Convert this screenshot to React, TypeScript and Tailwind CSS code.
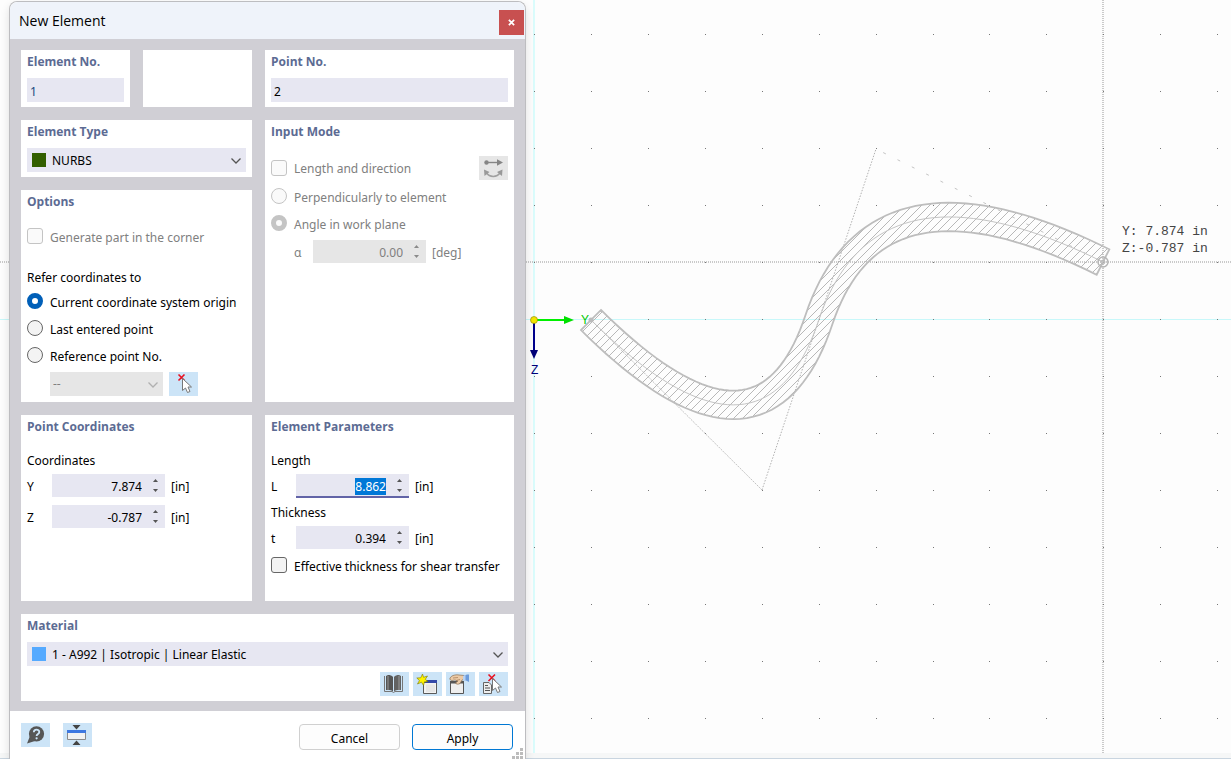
import { useEffect, useRef, type InputHTMLAttributes, type ReactNode } from "react";
import clsx from "clsx";

type Point = { x: number; y: number };

const controlPoints: Point[] = [
  { x: 591, y: 320 },
  { x: 762, y: 490 },
  { x: 876, y: 149 },
  { x: 1103, y: 262 },
];

const gridColumns = Array.from({ length: 40 }, (_, i) => Math.round(534.2 + i * 56.9));
const gridRows = Array.from({ length: 24 }, (_, i) => Math.round(34.4 + i * 57));

// quadratic segment sampled at an offset from its centre line
function offsetSegment(a: Point, b: Point, c: Point, offset: number) {
  return Array.from({ length: 41 }, (_, i) => {
    const t = i / 40;
    const x = (1 - t) ** 2 * a.x + 2 * t * (1 - t) * b.x + t * t * c.x;
    const y = (1 - t) ** 2 * a.y + 2 * t * (1 - t) * b.y + t * t * c.y;
    const dx = (1 - t) * (b.x - a.x) + t * (c.x - b.x);
    const dy = (1 - t) * (b.y - a.y) + t * (c.y - b.y);
    const len = Math.hypot(dx, dy);
    return { x: x + (dy / len) * offset, y: y - (dx / len) * offset };
  });
}

function splinePoints(offset: number) {
  const [p0, p1, p2, p3] = controlPoints;
  const mid = { x: (p1.x + p2.x) / 2, y: (p1.y + p2.y) / 2 };
  return [...offsetSegment(p0, p1, mid, offset), ...offsetSegment(mid, p2, p3, offset)];
}

const toPath = (points: Point[]) =>
  points.map((p, i) => `${i ? "L" : "M"}${p.x.toFixed(2)} ${p.y.toFixed(2)}`).join("");

const outline = toPath([...splinePoints(14.2), ...splinePoints(-14.2).reverse()]) + "Z";
const centerLine = toPath(splinePoints(0));

// 45 degree hatch lines, clipped to the outline
const hatchLines = Array.from({ length: 72 }, (_, i) => {
  const sum = 880 + Math.round(i * 8.5);
  return `M${sum - 430} 430L${sum - 190} 190`;
}).join("");

function Canvas() {
  return (
    <div className="absolute inset-0 flex flex-col bg-[#fdfdfd]">
      <svg className="min-h-0 w-full flex-1" role="img" aria-label="Work plane">
        <defs>
          <clipPath id="element-shape">
            <path d={outline} />
          </clipPath>
        </defs>

        <path d="M534 0V753" stroke="#dafcfc" strokeWidth="2" />
        <path d="M0 319.5H4000" stroke="#c8f8fa" />
        <path d="M0 262H4000M1103 0V753" stroke="#cacaca" strokeWidth="2" strokeDasharray="1 1" />

        {gridRows.map((y) =>
          gridColumns.map((x) => (
            <rect key={`${x}-${y}`} x={x} y={y} width="1" height="1" fill="#777" />
          )),
        )}

        <g fill="none">
          <path d="M591 320L762 490" stroke="#b4b4b4" strokeDasharray="2 1" strokeWidth="0.8" />
          <path d="M762 490L876 149" stroke="#a8a8a8" strokeDasharray="1.5 1.5" strokeWidth="0.9" />
          <path d="M876 149L1103 262" stroke="#c4c4c4" strokeDasharray="3 13" strokeDashoffset="-8" />
          <path
            d={hatchLines}
            clipPath="url(#element-shape)"
            stroke="#b8b8b8"
            strokeWidth="1"
            shapeRendering="crispEdges"
          />
          <path d={outline} stroke="#bdbdbd" strokeWidth="1.8" />
          <path d={centerLine} stroke="#c4c4c4" />
          <circle cx="591" cy="320" r="2.5" fill="#bbb" />
          <circle cx="1103" cy="262" r="5" stroke="#b5b5b5" strokeWidth="1.5" />
          <circle cx="1103" cy="262" r="2" stroke="#b5b5b5" />
        </g>

        <path d="M534 320H566" stroke="#00f000" strokeWidth="2" />
        <path d="M564 316L574 320L564 324Z" fill="#00e000" />
        <path d="M534 320V352" stroke="#00008b" strokeWidth="2" />
        <path d="M530 350H538L534 359Z" fill="#000078" />
        <circle cx="534" cy="320" r="3.5" fill="#f2e600" stroke="#8a8200" strokeWidth="0.6" />
        <g fontFamily="Liberation Sans, sans-serif" fontSize="12">
          <text x="581" y="324" fill="#00c800">Y</text>
          <text x="531" y="374" fill="#00007a">Z</text>
        </g>
        <g fontFamily="Liberation Mono, monospace" fontSize="13" fill="#444" xmlSpace="preserve">
          <text x="1122" y="235">Y: 7.874 in</text>
          <text x="1122" y="252">Z:-0.787 in</text>
        </g>
      </svg>
      <div className="h-[6px] border-b border-[#c9d5e0] bg-[#f6f7f7]" />
    </div>
  );
}

function Panel({ title, className, children }: { title?: string; className?: string; children?: ReactNode }) {
  return (
    <section className={clsx("bg-white px-[6px] pb-[5px]", className)}>
      {title && (
        <h2 className="h-[22px] font-['Open_Sans',sans-serif] text-[12px] leading-[23px] font-bold text-[#5c6b93]">
          {title}
        </h2>
      )}
      {children}
    </section>
  );
}

function Chevron({ className }: { className?: string }) {
  return (
    <svg
      viewBox="0 0 10 6"
      className={clsx("pointer-events-none absolute top-[10px] right-[5px] h-[6px] w-[10px]", className)}
      fill="none"
      stroke="currentColor"
      strokeWidth="1.3"
    >
      <path d="M0.5 0.5L5 5L9.5 0.5" />
    </svg>
  );
}

function SwatchSelect({ label, value, swatch }: { label: string; value: string; swatch: string }) {
  return (
    <div className="relative mt-[6px]">
      <select
        aria-label={label}
        className="block h-[24px] w-full appearance-none bg-[#e7e7f2] pt-[2px] pr-6 pl-[25px] text-black"
      >
        <option>{value}</option>
      </select>
      <span className={clsx("pointer-events-none absolute top-[5px] left-[5px] size-[14px]", swatch)} />
      <Chevron className="text-[#555]" />
    </div>
  );
}

function Choice({ label, type, className, ...props }: InputHTMLAttributes<HTMLInputElement> & { label: string }) {
  return (
    <label
      className={clsx(
        "flex h-[27px] items-center gap-[7px] whitespace-nowrap",
        props.disabled ? "text-[#808080]" : "text-black",
        className,
      )}
    >
      <input
        type={type}
        className={clsx(
          "mb-px size-[16px] shrink-0 appearance-none border border-[#666] bg-[#f3f3f3] disabled:border-[#c4c4c4] disabled:bg-[#fafafa]",
          type === "radio"
            ? "rounded-full checked:border-[5px] checked:border-[#005fb8] checked:bg-white disabled:checked:border-[#c4c4c4]"
            : "rounded-[3px]",
        )}
        {...props}
      />
      <span className="pt-[2px]">{label}</span>
    </label>
  );
}

type SpinFieldProps = {
  label: string;
  value: string;
  unit: string;
  labelWidth: string;
  disabled?: boolean;
  active?: boolean;
  className?: string;
};

function SpinField({ label, value, unit, labelWidth, disabled, active, className }: SpinFieldProps) {
  const input = useRef<HTMLInputElement>(null);

  useEffect(() => {
    if (active) {
      input.current?.focus();
      input.current?.select();
    }
  }, [active]);

  return (
    <div className={clsx("flex h-[23px] items-center", disabled ? "text-[#808080]" : "text-black", className)}>
      <label htmlFor={`field-${label}`} className={clsx("pt-[2px]", labelWidth)}>
        {label}
      </label>
      <div className="relative">
        <input
          ref={input}
          id={`field-${label}`}
          defaultValue={value}
          disabled={disabled}
          className={clsx(
            "block h-[23px] w-[113px] pt-[2px] pr-[23px] text-right outline-none selection:bg-[#0078d7] selection:text-white",
            disabled ? "bg-[#e6e6e6]" : "bg-[#e7e7f2]",
            active && "shadow-[0_1px_0_#6264a7,inset_0_-1px_0_#6264a7]",
          )}
        />
        <div className={clsx("absolute top-[3px] right-[6px] flex flex-col gap-[3px]", disabled ? "text-[#8a8a8a]" : "text-[#555]")}>
          <button type="button" disabled={disabled} aria-label={`Increase ${label}`} className="flex h-[7px] w-[7px] items-center justify-center">
            <svg viewBox="0 0 5 3" className="h-[3px] w-[5px]" fill="currentColor">
              <path d="M0 3L2.5 0L5 3Z" />
            </svg>
          </button>
          <button type="button" disabled={disabled} aria-label={`Decrease ${label}`} className="flex h-[7px] w-[7px] items-center justify-center">
            <svg viewBox="0 0 5 3" className="h-[3px] w-[5px]" fill="currentColor">
              <path d="M0 0H5L2.5 3Z" />
            </svg>
          </button>
        </div>
      </div>
      <span className="ml-[6px] pt-[2px]">{unit}</span>
    </div>
  );
}

function ToolButton({ label, disabled, children }: { label: string; disabled?: boolean; children: ReactNode }) {
  return (
    <button
      type="button"
      aria-label={label}
      disabled={disabled}
      className={clsx("h-[24px] w-[29px] shrink-0", disabled ? "bg-[#e6e6e6]" : "bg-[#cce4f7]")}
    >
      <svg viewBox="0 0 29 24" className="h-[24px] w-[29px]" fill="none">
        {children}
      </svg>
    </button>
  );
}

const arrowCursor = "M0 0V12L3 9.5L5 14L7.5 13L5.5 8.5H9Z";

function SwapIcon() {
  return (
    <>
      <path d="M7 6.5H19" stroke="#858585" strokeWidth="1.4" />
      <circle cx="7.5" cy="6.5" r="2.2" fill="#858585" />
      <path d="M18 3.2L24 6.5L18 9.8Z" fill="#858585" />
      <path d="M7.5 17C10.5 21.5 18 21.5 21 17" stroke="#a0a0a0" strokeWidth="1.5" />
      <path d="M5 13.5L10.5 16L5.5 20Z M23.5 13.5L18 16L23 20Z" fill="#999" />
    </>
  );
}

function PickIcon() {
  return (
    <>
      <path d="M9.5 2.5L15.5 8.5M15.5 2.5L9.5 8.5" stroke="#e81020" strokeWidth="1.6" />
      <path d={arrowCursor} transform="translate(13.5 6.5)" fill="#fff" stroke="#777" />
    </>
  );
}

function BookIcon() {
  return (
    <>
      <path d="M4.5 4V19.5H12L13.5 20.5L15 19.5H22.5V4" stroke="#777" />
      <path d="M6 4L8 3C10 3 12 3.5 13 5V19.5C11.5 18 9 17.8 6 18Z" fill="#555" />
      <path d="M21 4L19 3C17 3 15 3.5 14 5V19.5C15.5 18 18 17.8 21 18Z" fill="#626262" />
      <path d="M8 4V18M19 4V18" stroke="#aaa" strokeWidth="0.8" />
    </>
  );
}

function NewMaterialIcon() {
  return (
    <>
      <path d="M10.5 10.5H23.5V21.5H10.5Z" fill="#f2f2f2" stroke="#5a5a5a" />
      <path d="M13 8H24V11H13Z" fill="#3449a8" />
      <path d="M13 12.5H22V20H13Z" fill="#e6e6e6" />
      <path
        d="M9.5 2L10.6 5.3L14.5 4L12.3 7.3L15 9.5L11.5 9.7L10.5 13.5L8.5 10.2L4.5 12L6.4 8.5L3.8 6L7.7 5.8Z"
        fill="#fff200"
        stroke="#777700"
        strokeWidth="0.6"
      />
    </>
  );
}

function EditMaterialIcon() {
  return (
    <>
      <path d="M4.5 9.5H17.5V21.5H4.5Z" fill="#eee" stroke="#555" />
      <path d="M4 9H18V11.5H4Z" fill="#555" />
      <path
        d="M4 6C5.5 3.5 8 3 11 2.8L18 3.5V7.5L16 8L14 11.5C12.5 12.5 10 12.5 9.5 11L12 9L9 8L6 8.5C4.5 8.5 3.5 7.5 4 6Z"
        fill="#eccaa6"
        stroke="#8a7055"
        strokeWidth="0.7"
      />
      <path d="M10 8.5L14 7.5M7 6L12 5.5" stroke="#a07a58" strokeWidth="0.7" />
      <path d="M17 4L21 2.5H23V10L20 8.5L17 8Z" fill="#6b9bdc" />
      <path d="M17 4L19.5 3V8.5L17 8Z" fill="#b6d2f4" />
    </>
  );
}

function DeleteMaterialIcon() {
  return (
    <>
      <path d="M4.5 10.5H10L12.5 13V21.5H4.5Z" fill="#eee" stroke="#666" />
      <path d="M6 13.5H9M6 16H11M6 18.5H11" stroke="#555" />
      <path d="M9.5 2.5L16 9M16 2.5L9.5 9" stroke="#e81020" strokeWidth="1.6" />
      <path d={arrowCursor} transform="translate(13.5 6.5)" fill="#fff" stroke="#777" />
    </>
  );
}

function HelpIcon() {
  return (
    <>
      <circle cx="15.5" cy="10.8" r="7.6" fill="#565656" />
      <path d="M9 13L6 20.5L14 18Z" fill="#565656" />
      <path d="M12.8 9.2C12.8 5.8 18.3 5.8 18.3 9C18.3 11 15.6 10.8 15.6 13" stroke="#cce4f7" strokeWidth="1.8" />
      <circle cx="15.6" cy="15.3" r="1.1" fill="#cce4f7" />
    </>
  );
}

function CollapseIcon() {
  return (
    <>
      <path d="M9.5 2H17.5L13.5 6.5Z M9.5 22H17.5L13.5 17.5Z" fill="#444" />
      <path d="M4.5 8.5H22.5V16.5H4.5Z" fill="#f2f2f2" stroke="#8a8a8a" />
      <path d="M4 7H23V10H4Z" fill="#3e78e0" />
    </>
  );
}

function NewElementDialog() {
  return (
    <form
      aria-labelledby="dialog-title"
      className="relative ml-[9px] flex w-[517px] flex-col rounded-t-lg border border-b-0 border-[#bdbdc0] bg-white shadow-[0_4px_10px_rgba(0,0,0,0.12)]"
    >
      <header className="flex h-[37px] items-center justify-between rounded-t-lg bg-[#eff3fa] pr-px pl-[9px]">
        <h1 id="dialog-title" className="font-['Open_Sans',sans-serif] text-[14px] text-black">New Element</h1>
        <button type="button" aria-label="Close" className="mt-[4px] flex size-[25px] items-center justify-center bg-[#c85050]">
          <svg viewBox="0 0 8 8" className="size-[7px]" stroke="#fff" strokeWidth="2">
            <path d="M1 1L7 7M7 1L1 7" />
          </svg>
        </button>
      </header>

      <div className="grid grid-cols-[231px_1fr] gap-[13px] bg-[#d0cfd5] px-[11px] pt-[11px] pb-[10px]">
        <div className="grid grid-cols-2 gap-[13px]">
          <Panel title="Element No.">
            <input aria-label="Element No." defaultValue="1" className="mt-[6px] block h-[24px] w-full bg-[#e7e7f2] px-[3px] pt-[2px] text-[#1a4a80]" />
          </Panel>
          <Panel />
        </div>
        <Panel title="Point No.">
          <input aria-label="Point No." defaultValue="2" className="mt-[6px] block h-[24px] w-full bg-[#e7e7f2] px-[3px] pt-[2px] text-black" />
        </Panel>

        <div className="flex flex-col gap-[13px]">
          <Panel title="Element Type">
            <SwatchSelect label="Element Type" value="NURBS" swatch="bg-[#335f00]" />
          </Panel>
          <Panel title="Options" className="pb-[6px]">
            <Choice type="checkbox" label="Generate part in the corner" disabled className="mt-[11px]" />
            <p className="mt-[17px] h-[21px] leading-[21px] text-black">Refer coordinates to</p>
            <Choice type="radio" name="origin" label="Current coordinate system origin" defaultChecked />
            <Choice type="radio" name="origin" label="Last entered point" />
            <Choice type="radio" name="origin" label="Reference point No." />
            <div className="mt-[3px] flex gap-[6px] pl-[23px]">
              <div className="relative w-[113px]">
                <select
                  aria-label="Reference point"
                  disabled
                  className="block h-[24px] w-full appearance-none bg-[#e6e6e6] pl-[3px] text-[#808080] opacity-100"
                >
                  <option>--</option>
                </select>
                <Chevron className="text-[#b0b0b0]" />
              </div>
              <ToolButton label="Pick point"><PickIcon /></ToolButton>
            </div>
          </Panel>
        </div>

        <Panel title="Input Mode">
          <div className="mt-[14px] flex h-[24px] items-center justify-between">
            <Choice type="checkbox" label="Length and direction" disabled />
            <ToolButton label="Swap direction" disabled><SwapIcon /></ToolButton>
          </div>
          <Choice type="radio" name="mode" label="Perpendicularly to element" disabled className="mt-[3px]" />
          <Choice type="radio" name="mode" label="Angle in work plane" disabled defaultChecked />
          <SpinField label="α" value="0.00" unit="[deg]" labelWidth="w-[19px]" disabled className="mt-[3px] pl-[23px]" />
        </Panel>

        <Panel title="Point Coordinates">
          <p className="mt-[13px] h-[21px] leading-[21px] text-black">Coordinates</p>
          <SpinField label="Y" value="7.874" unit="[in]" labelWidth="w-[25px]" className="mt-[3px]" />
          <SpinField label="Z" value="-0.787" unit="[in]" labelWidth="w-[25px]" className="mt-[8px]" />
        </Panel>
        <Panel title="Element Parameters" className="pb-[22px]">
          <p className="mt-[13px] h-[21px] leading-[21px] text-black">Length</p>
          <SpinField label="L" value="8.862" unit="[in]" labelWidth="w-[25px]" active className="mt-[3px]" />
          <p className="mt-[5px] h-[21px] leading-[21px] text-black">Thickness</p>
          <SpinField label="t" value="0.394" unit="[in]" labelWidth="w-[25px]" className="mt-[3px]" />
          <Choice type="checkbox" label="Effective thickness for shear transfer" className="mt-[3px]" />
        </Panel>

        <Panel title="Material" className="col-span-2">
          <SwatchSelect label="Material" value="1 - A992 | Isotropic | Linear Elastic" swatch="bg-[#55aaff]" />
          <div className="mt-[6px] flex justify-end gap-[4px]">
            <ToolButton label="Material library"><BookIcon /></ToolButton>
            <ToolButton label="New material"><NewMaterialIcon /></ToolButton>
            <ToolButton label="Edit material"><EditMaterialIcon /></ToolButton>
            <ToolButton label="Pick material"><DeleteMaterialIcon /></ToolButton>
          </div>
        </Panel>
      </div>

      <footer className="flex items-start justify-between pt-[12px] pr-[12px] pb-[8px] pl-[11px] text-black">
        <div className="flex gap-[13px]">
          <ToolButton label="Help"><HelpIcon /></ToolButton>
          <ToolButton label="Collapse dialog"><CollapseIcon /></ToolButton>
        </div>
        <div className="flex gap-[12px] pt-px">
          <button type="button" className="h-[26px] w-[101px] rounded border border-[#d0d0d0] bg-[#fdfdfd] pt-[3px]">Cancel</button>
          <button type="submit" className="h-[26px] w-[101px] rounded border border-[#0078d4] bg-[#fdfdfd] pt-[3px]">Apply</button>
        </div>
      </footer>
      <svg viewBox="0 0 11 11" className="absolute right-[2px] bottom-0 size-[11px]" fill="#bcbcbc">
        <path d="M8 0h3v3h-3zM4 4h3v3h-3zM8 4h3v3h-3zM0 8h3v3h-3zM4 8h3v3h-3zM8 8h3v3h-3z" />
      </svg>
    </form>
  );
}

export default function App() {
  return (
    <main className="relative flex min-h-screen overflow-hidden pt-px font-['Noto_Sans',sans-serif] text-[12px]">
      <Canvas />
      <NewElementDialog />
    </main>
  );
}
